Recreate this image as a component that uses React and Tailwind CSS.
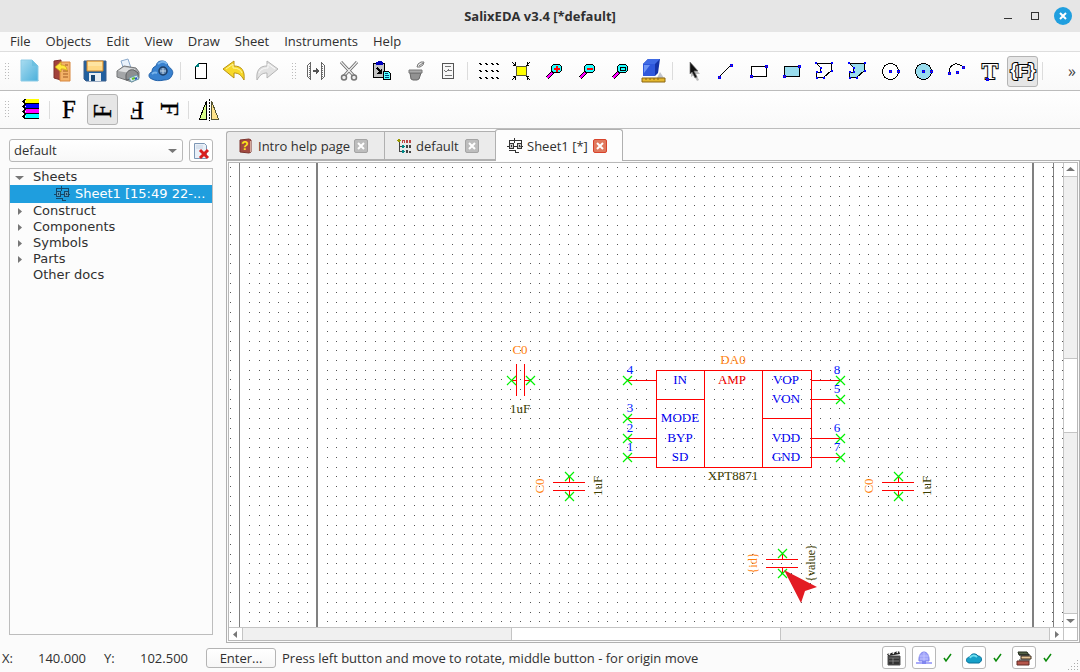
import { useState } from 'react';
import { clsx } from 'clsx';

// ---------- Toolbar icons ----------

function Icon({ children, crisp = false, size = 24, box = 24 }) {
  return (
    <svg
      width={size}
      height={size}
      viewBox={`0 0 ${box} ${box}`}
      fill="none"
      shapeRendering={crisp ? 'crispEdges' : 'auto'}
      aria-hidden="true"
      className="shrink-0 overflow-visible"
    >
      {children}
    </svg>
  );
}

const NewIcon = () => (
  <Icon>
    <defs>
      <linearGradient id="newDoc" x1="0" y1="0" x2="1" y2="1">
        <stop offset="0" stopColor="#a9dcf0" />
        <stop offset="1" stopColor="#4bb0db" />
      </linearGradient>
    </defs>
    <path d="M5 22h17l-3-4z" fill="#b9c4c8" />
    <path d="M4 1h11l6 6v15H4z" fill="url(#newDoc)" stroke="#8ccbe6" />
    <path d="M15 1v6h6z" fill="#6dc0e0" />
  </Icon>
);

const OpenIcon = () => (
  <Icon>
    <path d="M4 2l7-1v20l-7-2z" fill="#a2423b" stroke="#7c2f2c" />
    <path d="M10 3h10v19H10z" fill="#f3b268" stroke="#d7863c" />
    <path d="M13 12h5M13 15h5M13 18h5M15 6h3" stroke="#a35b22" />
    <path d="M5 8l6-5v3c4 0 6 2 6 6-2-2-3-2-6-2v3z" fill="#ffe83b" stroke="#c59b18" strokeWidth=".8" />
  </Icon>
);

const SaveIcon = () => (
  <Icon>
    <path d="M1 2h22v20H3l-2-2z" fill="#21609f" stroke="#3a5f8c" />
    <path d="M4 2h16v10H4z" fill="#ffd985" stroke="#d3872b" />
    <path d="M5 4h14M5 6h14" stroke="#fff0bd" />
    <path d="M6 14h12v8H6z" fill="#e9eef2" />
    <path d="M8 16h4v6H8z" fill="#174674" />
  </Icon>
);

const PrintIcon = () => (
  <Icon>
    <path d="M5 2l7-2 3 9-7 2z" fill="#eaf2fb" stroke="#8ba9cb" />
    <path d="M1 12l7-5 12 2 3 4v6l-7 4L1 18z" fill="#a4a6a8" stroke="#757779" />
    <path d="M2 12l6-4 12 2-6 4z" fill="#dedfe0" />
    <path d="M10 21v-5c1-4 4-6 8-5l4 3v5z" fill="#8d8f91" stroke="#5c5e60" />
    <path d="M13 19l8-3 2 4-8 3z" fill="#d6e8ef" stroke="#6d99a9" />
    <path d="M16 20l3-1" stroke="#64c424" strokeWidth="2" />
    <path d="M19 20l2-1" stroke="#2854be" strokeWidth="2" />
  </Icon>
);

const CloudIcon = () => (
  <Icon>
    <path d="M3 20c-4-1-4-6 0-7 0-3 1-5 4-6 1-4 3-5 6-5 4 0 5 2 6 5 4 3 6 6 4 9-1 4-5 5-8 5-4 1-9 1-12-1z" fill="#3881cf" stroke="#1f5fa8" />
    <path d="M9 5c3-3 7-3 9 0M3 15c2-2 3-2 5-1" stroke="#78b3ea" strokeWidth="2" />
    <circle cx="14" cy="12" r="4" fill="#5f87b3" stroke="#1d3e66" strokeWidth="1.500" />
    <path d="M14 9v6M11 12h6" stroke="#c4d6e8" />
  </Icon>
);

const PageIcon = () => (
  <Icon crisp>
    <path d="M9.500 4.500h8v15h-11v-12z" fill="#fff" />
    <path d="M9 4.500h8.500v15h-11V7" stroke="#000" />
    <path d="M6 7h1V6h1V5h1V4h1v4H6z" fill="#008080" />
  </Icon>
);

const UndoIcon = () => (
  <Icon>
    <path d="M1 10l11-8v5c8 0 11 5 10 14-3-5-5-7-10-7v5z" fill="#f8d928" stroke="#b99212" strokeLinejoin="round" />
    <path d="M4 10l7-5v4c5 0 8 2 9 5" stroke="#fff5a0" />
  </Icon>
);

const RedoIcon = () => (
  <Icon>
    <path d="M23 10L12 2v5C4 7 1 12 2 21c3-5 5-7 10-7v5z" fill="#e2e2e2" stroke="#b5b5b5" strokeLinejoin="round" />
    <path d="M20 10l-7-5v4c-5 0-8 2-9 5" stroke="#fafafa" />
  </Icon>
);

const BusIcon = () => (
  <Icon crisp>
    <path d="M6.500 3v18M6 4.500H5M5 5.500H4M3.500 6v12M4 18.500h1M5 19.500h1M17.500 3v18M18 4.500h1M19 5.500h1M20.500 6v12M19 18.500h1M18 19.500h1" stroke="#666" />
    <path d="M5.500 7v11M18.500 7v11" stroke="#777" strokeDasharray="1 1" />
    <path d="M9 12h4" stroke="#555" strokeWidth="2" />
    <path d="M12 9l4 3-4 3z" fill="#555" />
  </Icon>
);

const CutIcon = () => (
  <Icon>
    <path d="M4 3l13 14M20 3L7 17" stroke="#686868" strokeWidth="3" />
    <path d="M4 3l13 14M20 3L7 17" stroke="#eee" strokeWidth="1.300" />
    <circle cx="7" cy="18.500" r="2.500" fill="#eee" stroke="#777" strokeWidth="1.500" />
    <circle cx="17" cy="18.500" r="2.500" fill="#eee" stroke="#777" strokeWidth="1.500" />
  </Icon>
);

const PasteIcon = () => (
  <Icon crisp>
    <path d="M3.500 4.500h11v14h-11z" fill="#c4c4c4" stroke="#000" />
    <path d="M7 3h1V2h4v1h1v3H6V3z" fill="#0000c0" />
    <path d="M7 9l4 4" stroke="#000" strokeWidth="2" />
    <path d="M12 9v6H7z" fill="#000" />
    <path d="M13.500 12.500h5l2 2v6h-7z" fill="#5ff" stroke="#000" />
    <path d="M15 14.500h3M15 16.500h4M15 18.500h4" stroke="#047" />
  </Icon>
);

const TrashIcon = () => (
  <Icon>
    <path d="M7 14h11l-2 6-2 1h-4l-2-1z" fill="#929292" stroke="#666" />
    <path d="M6 11h13v3H6z" fill="#aaa" stroke="#777" />
    <path d="M14 8l1-3 3-2h3l-1 3-3 2zM16 7l4-3" fill="#eee" stroke="#777" />
  </Icon>
);

const CheckListIcon = () => (
  <Icon crisp>
    <path d="M6.500 4.500h11v15h-11z" fill="#f8f8f8" stroke="#555" />
    <path d="M9 7.500h6M12 11.500h4M9 16.500h7" stroke="#777" />
    <path d="M8 11l2 2 3-3" stroke="#777" />
  </Icon>
);

const GridIcon = () => (
  <Icon crisp>
    {[3, 9, 15, 20].map((x) =>
      [4, 11, 18].map((y) => <path key={`${x}-${y}`} d={`M${x} ${y}h2v1h1v1h-2v-1h-1z`} fill="#000" />)
    )}
  </Icon>
);

const FitIcon = () => (
  <Icon crisp>
    <path d="M7.500 7.500h10v9h-10z" fill="#ff0" stroke="#553" />
    <path d="M3 3l4 4M21 3l-4 4M3 21l4-4M21 21l-4-4M4 6.500h3M6.500 6V3M20 6.500h-3M18.500 6V3M4 17.500h3M6.500 18v3M20 17.500h-3M18.500 18v3" stroke="#000" />
  </Icon>
);

function ZoomIcon({ kind }) {
  return (
    <Icon crisp>
      <path d="M5 19l6-6" stroke="#000" strokeWidth="4" />
      <path d="M5 19l5-5" stroke="#f0f" strokeWidth="2" />
      <path d="M11.500 5.500h6l2 2v4l-2 2h-6l-2-2v-4z" fill="#2ff" stroke="#000" />
      {kind === 'in' && <path d="M12 9h6v2h-6zM14 7h2v6h-2z" fill="#f00" />}
      {kind === 'out' && <path d="M12 9h6v2h-6z" fill="#f00" />}
      {kind === 'window' && <path d="M12.500 8.500h5v3h-5z" stroke="#000" />}
    </Icon>
  );
}

const CubeIcon = () => (
  <Icon>
    <path d="M16 19h7l-4-6z" fill="#c2c5cc" />
    <path d="M2 5l5-5h12l-2 14-3 3H2z" fill="#1433a8" />
    <path d="M2 5h12v12H2z" fill="#2f58dc" />
    <path d="M2 5l5-5h12l-5 5z" fill="#3f6ae4" />
    <path d="M3 6h6l-6 8z" fill="#6f95f4" />
    <path d="M1 19h23v4H1z" fill="#e4b72e" stroke="#8b6712" />
    <path d="M5 19v2M9 19v2M13 19v2M17 19v2" stroke="#8b6712" />
  </Icon>
);

const PointerIcon = () => (
  <Icon>
    <path d="M10 5l9 10h-4l3 6-2 1-3-6-3 2z" fill="#bbb" />
    <path d="M9 3l8 9h-4l3 6-2 1-3-6-2 2z" fill="#111" stroke="#777" strokeWidth=".7" />
  </Icon>
);

// Small blue handle with a red centre, used by every drawing tool
function Handle({ x, y, plain = false }) {
  return (
    <>
      <rect x={x - 1} y={y - 1} width={plain ? 2 : 3} height={plain ? 2 : 3} fill="#00f" />
      {!plain && <rect x={x} y={y} width="1" height="1" fill="#a22" />}
    </>
  );
}

const LineIcon = () => (
  <Icon crisp>
    <path d="M5 18L17 6" stroke="#000" />
    <Handle x={5} y={18} />
    <Handle x={17} y={6} />
  </Icon>
);

function RectIcon({ fill }) {
  return (
    <Icon crisp>
      <path d="M4.500 7.500h15v10h-15z" fill={fill} stroke="#000" />
      <Handle x={4} y={17} />
      <Handle x={19} y={7} />
    </Icon>
  );
}

function PolyIcon({ fill }) {
  return (
    <Icon crisp>
      <path d="M3.500 4.500h15v7l-8 7h-7v-5h4v-5z" fill={fill} stroke="#000" />
      {[[3, 4], [19, 4], [19, 12], [11, 19], [4, 19], [4, 13], [8, 13], [8, 9]].map(([x, y]) => (
        <Handle key={`${x}-${y}`} x={x} y={y} plain />
      ))}
    </Icon>
  );
}

function CircleIcon({ fill }) {
  return (
    <Icon crisp>
      <circle cx="11.500" cy="12.500" r="8" fill={fill} stroke="#000" />
      <Handle x={11} y={12} />
      <Handle x={19} y={12} />
    </Icon>
  );
}

const ArcIcon = () => (
  <Icon crisp>
    <path d="M4 14c0-9 8-12 14-6" stroke="#000" />
    <Handle x={4} y={14} />
    <Handle x={12} y={13} />
    <Handle x={18} y={8} />
  </Icon>
);

const TextIcon = () => (
  <Icon>
    <text x="12" y="20" textAnchor="middle" fontSize="24" fontFamily="'Liberation Serif', serif" fontWeight="700" fill="#fff" stroke="#000" strokeWidth="2" paintOrder="stroke">T</text>
    <Handle x={9} y={20} />
  </Icon>
);

const ParamIcon = () => (
  <Icon>
    <g textAnchor="middle" fontFamily="'Liberation Sans', sans-serif" fontWeight="700" fill="#fff" stroke="#000" strokeWidth="2" paintOrder="stroke">
      <text x="3" y="17" fontSize="19">{'{'}</text>
      <text x="21" y="17" fontSize="19">{'}'}</text>
      <text x="12" y="18" fontSize="16">F</text>
    </g>
  </Icon>
);

const LayersIcon = () => (
  <Icon crisp>
    {['#ff0', '#00f', '#f0f', '#0ff'].map((color, i) => (
      <g key={color} transform={`translate(1 ${i * 5 - 1})`}>
        <path d="M5 2h15v4H5l2-2H3z" fill={color} />
        <path d="M5 2.500h2M4 3.500h2M3 4.500h3M4 5.500h2M5 6.500h15" stroke="#000" />
      </g>
    ))}
  </Icon>
);

function LetterIcon({ angle }) {
  return (
    <Icon>
      <text x="11" y="20" transform={`rotate(${angle} 12 12)`} textAnchor="middle" fontSize="25" fontFamily="'Liberation Serif', serif" fill="#000" stroke="#000" strokeWidth=".3">F</text>
    </Icon>
  );
}

const MirrorIcon = () => (
  <Icon crisp>
    <path d="M9.500 3v18h-7z" fill="#d9ff8b" stroke="#000" />
    <path d="M14.500 3v18h7z" fill="#ffe48b" stroke="#553" />
    <path d="M12.500 1v22" stroke="#000" strokeDasharray="2 1" />
  </Icon>
);

const SheetIcon = ({ color = '#333' }) => (
  <Icon crisp size={16} box={16}>
    <path d="M2 2.500h5M9 2.500h6M2.500 3v3M14.500 3v3M7.500 0v5M8 2.500h1M2 12.500h6M8 14.500h4M8.500 12v2M0 8.500h3M13 8.500h3" stroke={color} />
    <path d="M2.500 5.500h4v5h-4zM10.500 5.500h4v5h-4z" fill="#999" fillOpacity=".5" stroke={color} />
    <path d="M4.500 7v2M12.500 7v2M7 8.500h3" stroke={color} />
  </Icon>
);

const TreeDocIcon = () => (
  <Icon crisp size={16} box={16}>
    <path d="M2 1h2v1h1v1H4v1H2V3H1V2h1z" fill="#990" />
    <path d="M3.500 4v10M4 8.500h2M4 13.500h2" stroke="#444" />
    <path d="M6 7h2v1h1v1H8v1H6zM6 12h2v1h1v1H8v1H6z" fill="#088" />
    <path d="M6.500 5V2.500h2V5M10.500 5V2.500h1V5M13.500 2.500h1V4h-1z" stroke="#b44" />
    <path d="M10.500 7.500h1v2h-1zM13 7l2 3M15 7l-2 3M10.500 15v-3h1v3M13.500 15v-2h1v2" stroke="#444" />
  </Icon>
);

const HelpBookIcon = () => (
  <Icon size={16} box={16}>
    <path d="M2 2l9-1 2 1v12l-2 1-9-1z" fill="#a34a40" stroke="#7b332c" />
    <path d="M12.500 3v11" stroke="#d7a99b" />
    <text x="7" y="12" textAnchor="middle" fontSize="12" fontWeight="700" fontFamily="'Liberation Sans', sans-serif" fill="#ffe81a">?</text>
  </Icon>
);

const DeleteDocIcon = () => (
  <Icon size={16} box={16}>
    <path d="M1.500 .5h10l2 2v13h-12z" fill="#e9f0f8" stroke="#7d97b5" />
    <path d="M3 3h7M3 5h7" stroke="#c5d3e4" />
    <path d="M7 7l8 8M15 7l-8 8" stroke="#d81e1e" strokeWidth="3" />
  </Icon>
);

const toolGroups = [
  [
    ['New', <NewIcon />],
    ['Open', <OpenIcon />],
    ['Save', <SaveIcon />],
    ['Print', <PrintIcon />],
    ['Cloud', <CloudIcon />],
  ],
  [
    ['Page', <PageIcon />],
    ['Undo', <UndoIcon />],
    ['Redo', <RedoIcon />],
  ],
  [
    ['Connect', <BusIcon />],
    ['Cut', <CutIcon />],
    ['Paste', <PasteIcon />],
    ['Delete', <TrashIcon />],
    ['Properties', <CheckListIcon />],
  ],
  [
    ['Grid', <GridIcon />],
    ['Fit', <FitIcon />],
    ['Zoom in', <ZoomIcon kind="in" />],
    ['Zoom out', <ZoomIcon kind="out" />],
    ['Zoom window', <ZoomIcon kind="window" />],
    ['3D view', <CubeIcon />],
  ],
  [
    ['Select', <PointerIcon />],
    ['Line', <LineIcon />],
    ['Rectangle', <RectIcon fill="#fff" />],
    ['Filled rectangle', <RectIcon fill="#9de" />],
    ['Polygon', <PolyIcon fill="#fff" />],
    ['Filled polygon', <PolyIcon fill="#9de" />],
    ['Circle', <CircleIcon fill="#fff" />],
    ['Filled circle', <CircleIcon fill="#9de" />],
    ['Arc', <ArcIcon />],
    ['Text', <TextIcon />],
    ['Parameter', <ParamIcon />],
  ],
];

const menus = ['File', 'Objects', 'Edit', 'View', 'Draw', 'Sheet', 'Instruments', 'Help'];
const treeItems = ['Construct', 'Components', 'Symbols', 'Parts'];

function ToolButton({ label, active, onClick, children }) {
  return (
    <button
      type="button"
      aria-label={label}
      onClick={onClick}
      className={clsx(
        'mx-px flex h-[31px] w-[31px] shrink-0 items-center justify-center rounded-[3px] border',
        active ? 'border-[#b4b4b4] bg-[#e6e6e6]' : 'border-transparent'
      )}
    >
      {children}
    </button>
  );
}

const Separator = () => <div className="mx-[3px] h-[18px] w-px shrink-0 bg-[#dcdcdc]" />;

const Grip = () => (
  <svg width="7" height="17" shapeRendering="crispEdges" aria-hidden="true" className="shrink-0">
    <path d="M.5 0v17M3.500 0v17" stroke="#bbb" strokeDasharray="1 2" />
  </svg>
);

// ---------- Schematic ----------

const STEP = 9.677;

function gridPath() {
  let d = '';
  for (let row = 0; row < 110; row++) {
    const y = Math.floor(4.05 + row * STEP);
    for (let col = 0; col < 200; col++) {
      d += `M${Math.floor(1.3 + col * STEP)} ${y}h1v1h-1z`;
    }
  }
  return d;
}

const GRID = gridPath();

const pins = [
  { n: '4', y: 217, x: 398, to: 427 },
  { n: '3', y: 255, x: 398, to: 427 },
  { n: '2', y: 275, x: 398, to: 427 },
  { n: '1', y: 294, x: 398, to: 427 },
  { n: '8', y: 217, x: 611, to: 583 },
  { n: '5', y: 236, x: 611, to: 583 },
  { n: '6', y: 275, x: 611, to: 583 },
  { n: '7', y: 294, x: 611, to: 583 },
];

const pinNames = [
  ['IN', 451, 221],
  ['MODE', 451, 259],
  ['BYP', 451, 279],
  ['SD', 451, 298],
  ['VOP', 557, 221],
  ['VON', 557, 240],
  ['VDD', 557, 279],
  ['GND', 557, 298],
];

const Cross = ({ x, y }) => (
  <path d={`M${x - 4} ${y - 4}l9 9M${x + 5} ${y - 4}l-9 9`} stroke="#00f000" strokeWidth="1.200" />
);

function Capacitor({ x, y, id, value, size = 13 }) {
  return (
    <g transform={`translate(${x} ${y})`}>
      <path d="M-16 -3.500h32M-16 4.500h32M.5 -10v6M.5 5v6" stroke="#f00" shapeRendering="crispEdges" />
      <Cross x={0} y={-10} />
      <Cross x={0} y={10} />
      <text transform="translate(-25 0) rotate(-90)" fontSize={size} fill="#ff7f0e">{id}</text>
      <text transform="translate(33 0) rotate(-90)" fontSize={size} fill="#3c3c00">{value}</text>
    </g>
  );
}

function Schematic() {
  return (
    <svg className="block h-full w-full bg-white" fill="none" fontFamily="'Liberation Serif', serif" fontSize="13" textAnchor="middle">
      <path d={GRID} fill="#555" shapeRendering="crispEdges" />
      <g fill="#808080" shapeRendering="crispEdges">
        <rect x="10" width="1" height="100%" />
        <rect x="87" width="2" height="100%" />
        <rect x="803" width="2" height="100%" />
        <rect x="824" width="1" height="100%" />
      </g>

      <g stroke="#f00" shapeRendering="crispEdges">
        <path d="M427.500 207.500h155v97h-155zM475.500 207.500v97M533.500 207.500v97M427.500 236.500h48M533.500 255.500h49" />
        {pins.map((p) => <path key={p.n} d={`M${p.x} ${p.y}.5H${p.to}`} />)}
        <path d="M287.500 201v32M295.500 201v32M282 217.500h6M296 217.500h6" />
      </g>
      {pins.map((p) => (
        <g key={p.n}>
          <Cross x={p.x} y={p.y} />
          <text x={p.x < 500 ? 401 : 608} y={p.y - 6} fill="#0020ff">{p.n}</text>
        </g>
      ))}
      {pinNames.map(([name, x, y]) => <text key={name} x={x} y={y} fill="#0000f0">{name}</text>)}
      <text x="504" y="201" fill="#ff7f0e">DA0</text>
      <text x="503" y="221" fill="#f00000">AMP</text>
      <text x="504" y="317" fill="#3c3c00">XPT8871</text>

      <Cross x={282} y={217} />
      <Cross x={301} y={217} />
      <text x="291" y="191" fill="#ff7f0e">C0</text>
      <text x="291" y="250" fill="#3c3c00">1uF</text>

      <Capacitor x={340} y={323} id="C0" value="1uF" />
      <Capacitor x={669} y={323} id="C0" value="1uF" />
      <Capacitor x={553} y={400} id="{id}" value="{value}" size={12} />
      <path d="M555 407l33 17-12 4-4 12z" fill="#e31b23" />
    </svg>
  );
}

// ---------- Panels ----------

function Arrow({ d }) {
  return (
    <svg width="9" height="9" viewBox="0 0 9 9" aria-hidden="true" className="shrink-0">
      <path d={d} fill="#777" />
    </svg>
  );
}

const UP = 'M0 6h9L4.500 2z';
const DOWN = 'M0 3h9L4.500 7z';
const LEFT = 'M6 1v7L2 4.500z';
const RIGHT = 'M3 1v7l4-3.500z';

function SidePanel() {
  return (
    <aside className="flex w-[226px] shrink-0 flex-col pt-[10px] pr-[13px] pb-2 pl-[9px]">
      <div className="flex justify-between">
        <div className="relative w-[174px]">
          <select
            aria-label="Project"
            className="h-[23px] w-full appearance-none rounded-[3px] border border-[#b8b8b8] bg-gradient-to-b from-white to-[#f8f8f8] pb-px pl-1 text-[13px] leading-5"
          >
            <option>default</option>
          </select>
          <span className="pointer-events-none absolute top-[7px] right-[6px]"><Arrow d={DOWN} /></span>
        </div>
        <button type="button" aria-label="Remove" className="flex h-[23px] w-[24px] items-center justify-center rounded-[3px] border border-[#b8b8b8] bg-white">
          <DeleteDocIcon />
        </button>
      </div>
      <ul className="mt-[6px] flex-1 border border-[#bdbdbd] bg-[#fcfcfc] font-['DejaVu_Sans',sans-serif] text-[13px] leading-4">
        <li>
          <div className="flex items-center gap-[9px] pl-[5px]"><Arrow d={DOWN} />Sheets</div>
          <div className="flex h-[18px] items-center gap-[5px] bg-[#1f9ede] pl-[44px] text-white">
            <SheetIcon color="#14486b" />
            <span className="whitespace-nowrap">Sheet1 [15:49 22-...</span>
          </div>
        </li>
        {treeItems.map((name) => (
          <li key={name} className="flex items-center gap-[9px] pl-[5px]"><Arrow d={RIGHT} />{name}</li>
        ))}
        <li className="pl-[23px]">Other docs</li>
      </ul>
    </aside>
  );
}

function Tab({ icon, label, active, className }) {
  return (
    <div
      role="tab"
      aria-selected={active}
      className={clsx(
        'flex shrink-0 items-center border-[#b0b0b0] whitespace-nowrap',
        active ? 'h-[32px] rounded-t-[3px] border border-b-0 bg-[#fdfdfd]' : 'h-[29px] border-t border-b border-l bg-[#ebebeb]',
        className
      )}
    >
      {icon}
      <span className="ml-1 flex-1">{label}</span>
      <button
        type="button"
        aria-label={`Close ${label}`}
        className={clsx(
          'flex h-[14px] w-[14px] items-center justify-center rounded-[2px] border',
          active ? 'border-[#d8432b] bg-[#e07a5f]' : 'border-[#a4a4a4] bg-[#bdbdbd]'
        )}
      >
        <svg width="8" height="8" aria-hidden="true"><path d="M1 1l6 6M7 1L1 7" stroke="#fff" strokeWidth="2" /></svg>
      </button>
    </div>
  );
}

function Workspace() {
  return (
    <main className="flex min-w-0 flex-1 flex-col">
      <div role="tablist" className="flex h-[32px] items-end">
        <Tab icon={<HelpBookIcon />} label="Intro help page" className="mb-px w-[158px] rounded-tl-[3px] pr-4 pl-[11px]" />
        <Tab icon={<TreeDocIcon />} label="default" className="mb-px w-[111px] pr-4 pl-[11px]" />
        <Tab icon={<SheetIcon />} label="Sheet1 [*]" active className="z-10 w-[128px] pr-[15px] pl-[11px]" />
      </div>
      <div className="-mt-px flex min-h-0 flex-1 flex-col border border-[#b0b0b0] p-px">
        <div className="flex min-h-0 flex-1 flex-col border border-[#b8b8b8]">
          <div className="flex min-h-0 flex-1">
            <div className="min-w-0 flex-1 overflow-hidden"><Schematic /></div>
            <div className="flex w-[14px] flex-col border-l border-[#c4c4c4] bg-white">
              <button type="button" aria-label="Scroll up" className="flex h-[13px] items-center justify-center"><Arrow d={UP} /></button>
              <div className="flex flex-1 flex-col border-y border-[#c4c4c4] bg-[#f0f0f0]">
                <div className="flex-[181]" />
                <div className="flex-[74] border-y border-[#c4c4c4] bg-white" />
                <div className="flex-[180]" />
              </div>
              <button type="button" aria-label="Scroll down" className="flex h-[13px] items-center justify-center"><Arrow d={DOWN} /></button>
            </div>
          </div>
          <div className="flex h-[13px] border-t border-[#c4c4c4] bg-white">
            <button type="button" aria-label="Scroll left" className="flex w-[13px] items-center justify-center"><Arrow d={LEFT} /></button>
            <div className="flex flex-1 border-x border-[#c4c4c4] bg-[#f0f0f0]">
              <div className="flex-1" />
              <div className="flex-1 border-x border-[#c4c4c4] bg-white" />
              <div className="flex-1" />
            </div>
            <button type="button" aria-label="Scroll right" className="flex w-[13px] items-center justify-center"><Arrow d={RIGHT} /></button>
            <div className="w-[14px] border-l border-[#c4c4c4]" />
          </div>
        </div>
      </div>
    </main>
  );
}

function StatusButton({ label, children }) {
  return (
    <button type="button" aria-label={label} className="flex h-[23px] w-[24px] items-center justify-center rounded-[3px] border border-[#b8b8b8] bg-white">
      {children}
    </button>
  );
}

const Tick = () => (
  <div className="w-[14px]">
    <svg width="11" height="10" viewBox="0 0 11 10" fill="none" aria-hidden="true" className="block">
      <path d="M2 5l2 3 5-7" stroke="#0a8a0a" strokeWidth="1.500" />
    </svg>
  </div>
);

function StatusBar() {
  return (
    <footer className="flex h-[29px] shrink-0 items-center">
      <span className="w-[38px] pl-[2px]">X:</span>
      <output className="w-[66px]">140.000</output>
      <span className="w-[36px]">Y:</span>
      <output className="w-[66px]">102.500</output>
      <button type="button" className="flex h-[20px] w-[70px] items-center justify-center rounded-[3px] border border-[#b4b4b4] bg-gradient-to-b from-white to-[#f6f6f6]">Enter...</button>
      <span className="ml-[6px] flex-1 whitespace-nowrap">Press left button and move to rotate, middle button - for origin move</span>
      <div className="flex items-center gap-[6px]">
        <StatusButton label="Video">
          <Icon size={16} box={16}>
            <path d="M2 6h12v9H2z" fill="#333" stroke="#555" />
            <path d="M1 4l12-3 1 3L2 6z" fill="#222" />
            <path d="M3 5l1-2M7 4l1-2M11 3l1-2" stroke="#eee" strokeWidth="1.500" />
            <path d="M3 8h10M3 11h10M7 8v6" stroke="#999" strokeWidth=".7" />
          </Icon>
        </StatusButton>
        <StatusButton label="Network">
          <Icon size={16} box={16}>
            <path d="M3 11c-1-12 11-12 10 0z" fill="#a1a5fa" stroke="#7e83ed" />
            <path d="M8 2v9M3 6h10M4 9h8" stroke="#c8cbff" strokeWidth=".7" />
            <path d="M0 12h16v2H0z" fill="#a8aafa" />
            <path d="M6 11h4v3H6z" fill="#8186ef" />
          </Icon>
        </StatusButton>
        <Tick />
        <StatusButton label="Cloud">
          <Icon size={16} box={16}>
            <path d="M3 13c-4-1-3-6 1-6 1-4 6-4 8-1 4 0 5 5 1 7z" fill="#16a0c8" stroke="#087099" />
            <path d="M4 8c1-3 5-3 7-1" stroke="#6fe0f2" strokeWidth="2" />
          </Icon>
        </StatusButton>
        <Tick />
        <StatusButton label="Library">
          <Icon size={16} box={16}>
            <path d="M2 2h9l2 3H3z" fill="#536144" stroke="#222c1c" />
            <path d="M5 6h10v3H5z" fill="#e8c796" stroke="#3a2a1d" />
            <path d="M1 11h12v4H1z" fill="#b5564b" stroke="#602a24" />
            <path d="M3 5h11M3 10h11" stroke="#222" />
          </Icon>
        </StatusButton>
        <Tick />
      </div>
      <svg width="24" height="29" shapeRendering="crispEdges" aria-hidden="true" className="shrink-0">
        <path d="M21 17.500h1M18 20.500h4M15 23.500h7M12 26.500h10" stroke="#aaa" strokeDasharray="1 2" />
      </svg>
    </footer>
  );
}

export default function App() {
  const [tool, setTool] = useState('Parameter');
  const [angle, setAngle] = useState(-90);

  return (
    <div className="flex h-screen flex-col overflow-hidden bg-[#fbfbfb] font-['Open_Sans',sans-serif] text-[13px] leading-5 text-[#303030]">
      {/* Title bar */}
      <header className="grid h-[32px] shrink-0 grid-cols-[1fr_auto_1fr] items-center bg-[#e6e6e6]">
        <h1 className="col-start-2 font-bold">SalixEDA v3.4 [*default]</h1>
        <div className="flex items-center justify-end gap-[19px] pr-2">
          <button type="button" aria-label="Minimize" className="flex h-[6px] w-[8px] items-end"><span className="h-px w-full bg-[#333]" /></button>
          <button type="button" aria-label="Maximize" className="h-[8px] w-[8px] border border-[#333]" />
          <button type="button" aria-label="Close" className="-ml-1 flex h-[18px] w-[18px] items-center justify-center rounded-full bg-[#209fdf]">
            <svg width="8" height="8" aria-hidden="true"><path d="M1 1l6 6M7 1L1 7" stroke="#fff" strokeWidth="2" /></svg>
          </button>
        </div>
      </header>

      {/* Menu */}
      <nav className="flex h-[20px] shrink-0 items-center gap-[15px] border-b border-[#dedede] pb-px pl-[10px]">
        {menus.map((name) => <button key={name} type="button" className="leading-[18px]">{name}</button>)}
      </nav>

      {/* Main toolbar */}
      <div className="flex h-[39px] shrink-0 items-center border-b border-[#bcbcbc] bg-gradient-to-b from-white to-[#f9f9f9] pl-[5px]">
        <Grip />
        {toolGroups.map((group, i) => (
          <div key={i} className="flex shrink-0 items-center">
            {i === 2 ? <div className="flex w-[16px] justify-end"><Grip /></div> : i > 0 && <Separator />}
            {group.map(([label, icon]) => (
              <ToolButton key={label} label={label} active={tool === label} onClick={() => setTool(label)}>{icon}</ToolButton>
            ))}
          </div>
        ))}
        <Separator />
        <button type="button" aria-label="More tools" className="ml-auto pr-1 text-[16px] leading-5 text-[#444]">»</button>
      </div>

      {/* Orientation toolbar */}
      <div className="flex h-[38px] shrink-0 items-center border-b border-[#bcbcbc] bg-gradient-to-b from-white to-[#f9f9f9] pl-[5px]">
        <div className="w-[8px]"><Grip /></div>
        <ToolButton label="Layers"><LayersIcon /></ToolButton>
        <Separator />
        {[0, -90, 180, 90].map((a) => (
          <ToolButton key={a} label={`Rotate ${a}`} active={angle === a} onClick={() => setAngle(a)}><LetterIcon angle={a} /></ToolButton>
        ))}
        <Separator />
        <ToolButton label="Mirror"><MirrorIcon /></ToolButton>
      </div>

      <div className="flex min-h-0 flex-1">
        <SidePanel />
        <Workspace />
      </div>
      <StatusBar />
    </div>
  );
}
